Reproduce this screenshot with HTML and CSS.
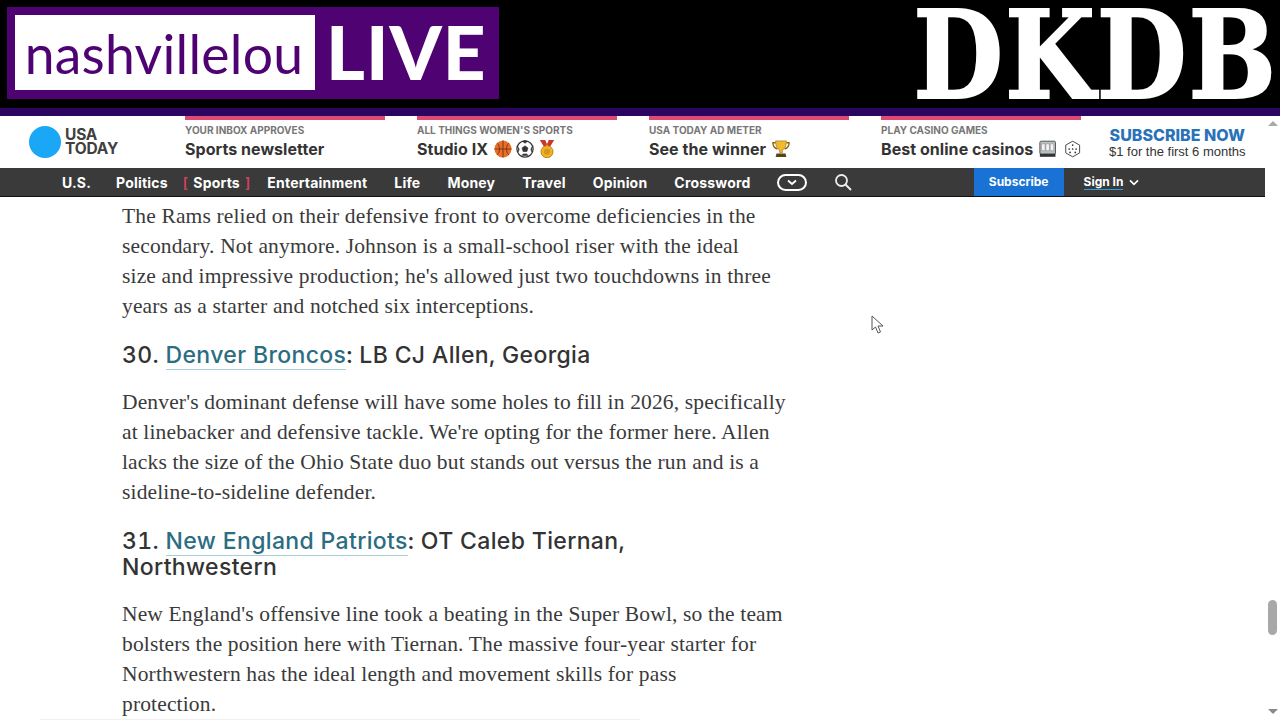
FILE: index.html
```html
<!DOCTYPE html>
<html lang="en">
<head>
    <meta charset="UTF-8">
    <title>NFL mock draft</title>
    <link rel="stylesheet" href="styles.css">
</head>
<body>
    <div class="banner">
        <div class="live-logo">
            <div class="live-name">nashvillelou</div>
            <div class="live-word">LIVE</div>
        </div>
        <div class="station">DKDB</div>
    </div>
    <div class="banner-line"></div>

    <div class="frame">
        <div class="page">
            <div class="promo-bar">
                <div class="brand">
                    <span class="brand-dot"></span>
                    <span class="brand-name">USA<br>TODAY</span>
                </div>
                <div class="promos">
                    <div class="promo">
                        <div class="promo-label">YOUR INBOX APPROVES</div>
                        <div class="promo-title">Sports newsletter</div>
                    </div>
                    <div class="promo">
                        <div class="promo-label">ALL THINGS WOMEN'S SPORTS</div>
                        <div class="promo-title"><span class="promo-text">Studio IX</span>
                            <svg class="emoji" viewBox="0 0 20 20"><circle cx="10" cy="10" r="9.500" fill="#e8702a"/><path d="M.5 10h19M10 .5v19M3.500 3.500c3.500 3 3.500 10 0 13M16.500 3.500c-3.500 3-3.500 10 0 13" fill="none" stroke="#7a2c10" stroke-width="1"/></svg>
                            <svg class="emoji" viewBox="0 0 20 20"><circle cx="10" cy="10" r="9" fill="#fff" stroke="#333" stroke-width="1.400"/><path d="M10 6.500l3.300 2.400-1.200 3.900H7.900L6.700 8.900zM7 1.500l3 2 3-2-3-.8zM2 7l1.500 3.500-1 3M18 7l-1.500 3.500 1 3M6.500 17.500l1.500-2h4l1.500 2" fill="#333" stroke="#333" stroke-width=".7"/></svg>
                            <svg class="emoji" viewBox="0 0 20 20"><path d="M2 0h6l3.500 8H7zM18 0h-6L8.500 8H13z" fill="#c9372c"/><circle cx="10" cy="13" r="6.700" fill="#f0b429" stroke="#b97a10" stroke-width="1"/><circle cx="10" cy="13" r="3.500" fill="#d9961a"/></svg>
                        </div>
                    </div>
                    <div class="promo">
                        <div class="promo-label">USA TODAY AD METER</div>
                        <div class="promo-title"><span class="promo-text">See the winner</span>
                            <svg class="emoji" viewBox="0 0 20 20"><path d="M4 3H1c0 4 2 6 5 7M16 3h3c0 4-2 6-5 7" fill="none" stroke="#8a6410" stroke-width="1.500"/><path d="M4 1h12c0 6-2 9-4.500 10v3h-3v-3C6 10 4 7 4 1z" fill="#f2b92c" stroke="#9a7012" stroke-width=".7"/><path d="M5 15h10l1 4H4z" fill="#5a4313"/></svg>
                        </div>
                    </div>
                    <div class="promo">
                        <div class="promo-label">PLAY CASINO GAMES</div>
                        <div class="promo-title"><span class="promo-text">Best online casinos</span>
                            <svg class="emoji" viewBox="0 0 20 20"><rect x="1" y="1" width="18" height="15" rx="1.500" fill="#b9c0c4" stroke="#444"/><path d="M3 4h4v8H3zM8 4h4v8H8zM13 4h4v8h-4z" fill="#f4f4f4" stroke="#777" stroke-width=".5"/><rect x="1" y="15.500" width="18" height="3.500" fill="#333"/></svg>
                            <svg class="emoji emoji-far" viewBox="0 0 20 20"><path d="M10 1l8 4.500v9L10 19l-8-4.500v-9z" fill="#fff" stroke="#444" stroke-width="1.100"/><circle cx="10" cy="5.500" r="1" fill="#333"/><circle cx="6" cy="10" r="1" fill="#333"/><circle cx="10" cy="10" r="1" fill="#333"/><circle cx="14" cy="10" r="1" fill="#333"/><circle cx="7" cy="14" r="1" fill="#333"/><circle cx="13" cy="14" r="1" fill="#333"/></svg>
                        </div>
                    </div>
                </div>
                <div class="subscribe-now">
                    <div class="subscribe-big">SUBSCRIBE NOW</div>
                    <div class="subscribe-small">$1 for the first 6 months</div>
                </div>
            </div>

            <nav class="nav">
                <a class="nav-link">U.S.</a>
                <a class="nav-link">Politics</a>
                <a class="nav-link nav-active"><span class="bracket">[</span>Sports<span class="bracket">]</span></a>
                <a class="nav-link">Entertainment</a>
                <a class="nav-link">Life</a>
                <a class="nav-link">Money</a>
                <a class="nav-link">Travel</a>
                <a class="nav-link">Opinion</a>
                <a class="nav-link">Crossword</a>
                <span class="more-pill">
                    <svg width="12" height="7" viewBox="0 0 12 7"><path d="M2 1.500l4 3.500 4-3.500" fill="none" stroke="#fff" stroke-width="1.800"/></svg>
                </span>
                <svg class="search-icon" width="18" height="18" viewBox="0 0 18 18"><circle cx="7.500" cy="7.500" r="5.500" fill="none" stroke="#eee" stroke-width="1.800"/><path d="M11.500 11.500l5.500 5.500" stroke="#eee" stroke-width="2"/></svg>
                <a class="nav-subscribe">Subscribe</a>
                <a class="nav-signin">Sign In</a>
                <svg width="10" height="7" viewBox="0 0 10 7"><path d="M1 1.300l4 4 4-4" fill="none" stroke="#fff" stroke-width="1.700"/></svg>
            </nav>

            <article class="article">
                <p>The Rams relied on their defensive front to overcome deficiencies in the<br>secondary. Not anymore. Johnson is a small-school riser with the ideal<br>size and impressive production; he's allowed just two touchdowns in three<br>years as a starter and notched six interceptions.</p>
                <h2>30. <a>Denver Broncos</a>: LB CJ Allen, Georgia</h2>
                <p>Denver's dominant defense will have some holes to fill in 2026, specifically<br>at linebacker and defensive tackle. We're opting for the former here. Allen<br>lacks the size of the Ohio State duo but stands out versus the run and is a<br>sideline-to-sideline defender.</p>
                <h2>31. <a>New England Patriots</a>: OT Caleb Tiernan,<br>Northwestern</h2>
                <p>New England's offensive line took a beating in the Super Bowl, so the team<br>bolsters the position here with Tiernan. The massive four-year starter for<br>Northwestern has the ideal length and movement skills for pass<br>protection.</p>
            </article>
        </div>

        <div class="scrollbar">
            <span class="arrow-up"></span>
            <span class="thumb"></span>
            <span class="arrow-down"></span>
        </div>
    </div>

    <div class="bottom-edge"></div>
    <svg class="cursor" width="14" height="20" viewBox="0 0 14 20"><path d="M1 1v14l3.500-3 2.500 6 2.500-1-2.500-6h5z" fill="#fff" stroke="#555" stroke-width="1"/></svg>
</body>
</html>
```

FILE: styles.css
```css
html, body {
    margin: 0;
    height: 720px;
    overflow: hidden;
    background: #fff;
}
body {
    position: relative;
    font-family: "Inter", sans-serif;
    color: #333;
}
a {
    text-decoration: none;
}

/* top banner */
.banner {
    height: 108px;
    background: #000;
    display: flex;
    justify-content: space-between;
}
.live-logo {
    width: 492px;
    height: 92px;
    margin: 7px 0 0 7px;
    padding: 8px 0 0 8px;
    box-sizing: border-box;
    background: #4f0272;
    display: flex;
}
.live-name {
    width: 300px;
    height: 75px;
    padding-right: 2px;
    box-sizing: border-box;
    background: #fff;
    color: #4f0272;
    font-family: "Lato", sans-serif;
    font-size: 53.500px;
    line-height: 76px;
    letter-spacing: 0.25px;
    text-align: center;
}
.live-word {
    margin-left: 11px;
    color: #fff;
    font-family: "Lato", sans-serif;
    font-weight: 900;
    font-size: 74.500px;
    line-height: 72px;
    letter-spacing: 1px;
}
.station {
    margin-right: 2px;
    height: 108px;
    color: #fff;
    font-family: "DejaVu Serif", serif;
    font-weight: 700;
    font-size: 122px;
    line-height: 110px;
    letter-spacing: 2px;
    -webkit-text-stroke: 2px #fff;
    transform: scaleX(0.85);
    transform-origin: right center;
}
.banner-line {
    height: 8px;
    background: #2b0560;
}

.frame {
    display: flex;
    height: 604px;
}
.page {
    width: 1265px;
    overflow: hidden;
}

/* promo row */
.promo-bar {
    height: 52px;
    display: flex;
}
.brand {
    width: 185px;
    padding-left: 29px;
    box-sizing: border-box;
    display: flex;
    align-items: center;
    gap: 4px;
}
.brand-dot {
    width: 32px;
    height: 32px;
    border-radius: 50%;
    background: #1aa7f5;
}
.brand-name {
    font-size: 15.500px;
    font-weight: 700;
    line-height: 14px;
    color: #404040;
    letter-spacing: -0.2px;
}
.promos {
    display: flex;
    gap: 32px;
}
.promo {
    width: 200px;
    border-top: 4px solid #df4a74;
    padding-top: 4px;
}
.promo-label {
    font-size: 10px;
    font-weight: 700;
    line-height: 12px;
    color: #777;
    white-space: nowrap;
}
.promo-title {
    margin-top: 3px;
    font-size: 16px;
    font-weight: 700;
    line-height: 20px;
    letter-spacing: 0.05px;
    color: #333;
    white-space: nowrap;
    display: flex;
    align-items: center;
    gap: 4px;
}
.promo-text {
    margin-right: 2px;
}
.emoji {
    width: 18px;
    height: 18px;
}
.emoji-far {
    margin-left: 3px;
}
.subscribe-now {
    margin-left: 28px;
    padding-top: 11px;
    text-align: center;
}
.subscribe-big {
    font-size: 16px;
    font-weight: 800;
    line-height: 16px;
    color: #2a72b8;
}
.subscribe-small {
    font-family: "Liberation Sans", sans-serif;
    font-size: 13px;
    line-height: 18px;
    color: #333;
}

/* section nav */
.nav {
    height: 29px;
    background: #3a3a3a;
    border-bottom: 1px solid #111;
    box-sizing: border-box;
    display: flex;
    align-items: center;
    padding-left: 62px;
    gap: 27px;
}
.nav-link {
    color: #fff;
    font-size: 14px;
    font-weight: 700;
    letter-spacing: 0.2px;
}
.nav-link:first-child {
    margin-right: -2px;
}
.nav-active {
    margin: 0 -10px 0 -12px;
    display: flex;
    gap: 5px;
}
.bracket {
    color: #d8405f;
    font-weight: 600;
}
.more-pill {
    width: 30px;
    height: 17px;
    border: 2px solid #fff;
    border-radius: 9px;
    box-sizing: border-box;
    margin-left: -1px;
    display: flex;
    align-items: center;
    justify-content: center;
}
.search-icon {
    flex: none;
}
.nav-subscribe {
    margin-left: 95px;
    width: 90px;
    height: 28px;
    line-height: 28px;
    text-align: center;
    background: #1a73d4;
    color: #fff;
    font-size: 12px;
    font-weight: 700;
}
.nav-signin {
    margin-left: -7px;
    margin-right: -21px;
    color: #fff;
    font-size: 12px;
    font-weight: 700;
    border-bottom: 1px solid #2aa0e0;
    line-height: 14px;
}

/* article */
.article {
    padding: 4px 0 0 122px;
}
.article p {
    margin: 0;
    font-family: "Liberation Serif", serif;
    font-size: 21.500px;
    letter-spacing: 0.15px;
    line-height: 30px;
    color: #3a3a3a;
    white-space: nowrap;
}
.article h2 {
    margin: 21px 0 19px;
    font-family: "Inter", sans-serif;
    font-size: 23px;
    font-weight: 500;
    font-variant-numeric: tabular-nums;
    letter-spacing: 0.35px;
    line-height: 26px;
    color: #333;
    white-space: nowrap;
}
.article h2 a {
    color: #2b6d82;
    border-bottom: 1px solid #a9d0d8;
}

/* scrollbar */
.scrollbar {
    width: 15px;
    position: relative;
}
.thumb {
    position: absolute;
    left: 3px;
    top: 484px;
    width: 9px;
    height: 35px;
    border-radius: 5px;
    background: #a8a8a8;
}
.arrow-up, .arrow-down {
    position: absolute;
    left: 3px;
    width: 0;
    height: 0;
    border-left: 5px solid transparent;
    border-right: 5px solid transparent;
}
.arrow-up {
    top: 5px;
    border-bottom: 5px solid #a8a8a8;
}
.arrow-down {
    bottom: 6px;
    border-top: 5px solid #8a8a8a;
}

.bottom-edge {
    position: absolute;
    left: 40px;
    bottom: 0;
    width: 600px;
    height: 1px;
    background: #f2f2f2;
}
.cursor {
    position: absolute;
    left: 871px;
    top: 315px;
}
```
